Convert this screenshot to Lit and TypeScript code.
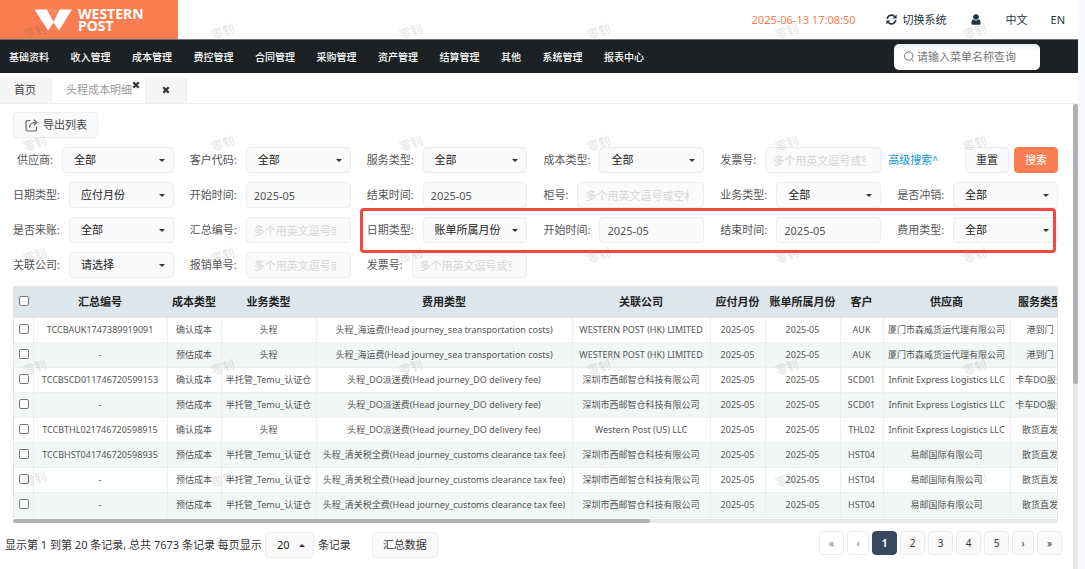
import { LitElement, html, css, nothing } from "lit";
import { customElement, state } from "lit/decorators.js";

type Field = { kind: "select" | "text" | "date"; id: string; label: string; value?: string };

const HINT = "多个用英文逗号或空格分隔";

const FIELDS: Field[][] = [
  [
    { kind: "select", id: "supplier", label: "供应商", value: "全部" },
    { kind: "select", id: "customer", label: "客户代码", value: "全部" },
    { kind: "select", id: "service", label: "服务类型", value: "全部" },
    { kind: "select", id: "cost", label: "成本类型", value: "全部" },
    { kind: "text", id: "invoice", label: "发票号" },
  ],
  [
    { kind: "select", id: "date-type", label: "日期类型", value: "应付月份" },
    { kind: "date", id: "start", label: "开始时间", value: "2025-05" },
    { kind: "date", id: "end", label: "结束时间", value: "2025-05" },
    { kind: "text", id: "container", label: "柜号" },
    { kind: "select", id: "business", label: "业务类型", value: "全部" },
    { kind: "select", id: "offset", label: "是否冲销", value: "全部" },
  ],
  [
    { kind: "select", id: "billed", label: "是否来账", value: "全部" },
    { kind: "text", id: "summary", label: "汇总编号" },
    { kind: "select", id: "date-type-2", label: "日期类型", value: "账单所属月份" },
    { kind: "date", id: "start-2", label: "开始时间", value: "2025-05" },
    { kind: "date", id: "end-2", label: "结束时间", value: "2025-05" },
    { kind: "select", id: "fee", label: "费用类型", value: "全部" },
  ],
  [
    { kind: "select", id: "company", label: "关联公司", value: "请选择" },
    { kind: "text", id: "claim", label: "报销单号" },
    { kind: "text", id: "invoice-2", label: "发票号" },
  ],
];

const MENU = ["基础资料", "收入管理", "成本管理", "费控管理", "合同管理", "采购管理", "资产管理", "结算管理", "其他", "系统管理", "报表中心"];

const COLUMNS = ["汇总编号", "成本类型", "业务类型", "费用类型", "关联公司", "应付月份", "账单所属月份", "客户", "供应商", "服务类型"];

const SEA = "头程_海运费(Head journey_sea transportation costs)";
const DELIVERY = "头程_DO派送费(Head journey_DO delivery fee)";
const CUSTOMS = "头程_清关税全费(Head journey_customs clearance tax fee)";
const HK = "WESTERN POST (HK) LIMITED";
const SZ = "深圳市西邮智仓科技有限公司";
const XM = "厦门市森威货运代理有限公司";
const INF = "Infinit Express Logistics LLC";
const YY = "易邮国际有限公司";
const TEMU = "半托管_Temu_认证仓";
const M = "2025-05";

const ROWS: string[][] = [
  ["TCCBAUK1747389919091", "确认成本", "头程", SEA, HK, M, M, "AUK", XM, "港到门"],
  ["-", "预估成本", "头程", SEA, HK, M, M, "AUK", XM, "港到门"],
  ["TCCBSCD011746720599153", "确认成本", TEMU, DELIVERY, SZ, M, M, "SCD01", INF, "卡车DO服务"],
  ["-", "预估成本", TEMU, DELIVERY, SZ, M, M, "SCD01", INF, "卡车DO服务"],
  ["TCCBTHL021746720598915", "确认成本", "头程", DELIVERY, "Western Post (US) LLC", M, M, "THL02", INF, "散货直发"],
  ["TCCBHST041746720598935", "预估成本", TEMU, CUSTOMS, SZ, M, M, "HST04", YY, "散货直发"],
  ["-", "预估成本", TEMU, CUSTOMS, SZ, M, M, "HST04", YY, "散货直发"],
  ["-", "预估成本", TEMU, CUSTOMS, SZ, M, M, "HST04", YY, "散货直发"],
];

const cross = html`<svg class="cross" viewBox="0 0 8 8" aria-hidden="true">
  <path d="M1.3 1.3 6.7 6.7M6.7 1.3 1.3 6.7" stroke="currentColor" stroke-width="2.3" />
</svg>`;

@customElement("app-root")
export class AppRoot extends LitElement {
  @state() private page = 1;

  static styles = css`
    :host {
      display: block;
      font-family: "Noto Sans", "Noto Sans CJK SC", sans-serif;
      font-size: 11px;
      line-height: 16px;
      color: #555;
      background: #f8f9fe;
    }
    * { box-sizing: border-box; }
    button, input, select { font: inherit; color: inherit; margin: 0; }
    button { cursor: pointer; }
    a { color: inherit; text-decoration: none; }
    ul { list-style: none; margin: 0; padding: 0; }

    .shell {
      position: relative;
      display: flex;
      flex-direction: column;
      min-height: 100vh;
      margin-right: 7px;
      background: #fff;
      overflow: hidden;
    }
    .marks {
      position: absolute;
      inset: 0;
      z-index: 3;
      display: grid;
      grid-template-columns: repeat(6, 188px);
      grid-auto-rows: 112px;
      padding-top: 24px;
      overflow: hidden;
      pointer-events: none;
      color: rgba(70, 60, 60, 0.13);
      font-size: 12px;
      font-weight: 700;
    }
    .mark { margin-left: 23px; }
    .mark span { display: inline-block; transform: rotate(-18deg); }

    .top { display: flex; height: 39px; }
    .brand {
      display: flex;
      align-items: center;
      gap: 6px;
      width: 178px;
      padding-left: 34px;
      background: #f97d50;
      color: #fff;
      font-size: 14px;
      font-weight: 700;
      line-height: 12px;
    }
    .brand svg { width: 38px; height: 22px; }
    .tools {
      display: flex;
      flex: 1;
      align-items: center;
      justify-content: flex-end;
      padding-right: 13px;
      color: #1d3642;
    }
    .clock { color: #f97d50; margin-right: 30px; }
    .switch { display: flex; align-items: center; gap: 6px; padding: 0; border: 0; background: none; margin-right: 24px; }
    .switch svg { width: 11px; height: 11px; }
    .user { display: flex; margin-right: 25px; }
    .user svg { width: 10px; height: 11px; }
    .lang { margin-right: 23px; }

    .nav {
      position: relative;
      z-index: 4;
      display: flex;
      align-items: center;
      justify-content: space-between;
      height: 34px;
      padding: 0 38px 0 9px;
      border-top: 1px solid #6d6f70;
      background: #1d2124;
      color: #fff;
    }
    .menu {
      display: flex;
      flex: 0 1 635px;
      justify-content: space-between;
      font-size: 10px;
      font-weight: 500;
      white-space: nowrap;
    }
    .find {
      display: flex;
      align-items: center;
      gap: 3px;
      width: 146px;
      height: 26px;
      padding: 0 10px;
      border-radius: 5px;
      background: linear-gradient(#eee, #fff 8px);
    }
    .find svg { flex: none; width: 10px; height: 11px; }
    .find input { flex: 1; min-width: 0; padding: 0; border: 0; outline: 0; background: none; color: #555; }
    .find input::placeholder { color: #777; opacity: 1; }

    .tabs { display: flex; height: 31px; padding-top: 4px; border-bottom: 1px solid #eee; }
    .tab { display: flex; align-items: center; background: #f5f5f5; border-right: 1px solid #eceef4; }
    .tab button { display: flex; padding: 0; border: 0; background: none; color: #333; }
    .home { padding: 0 15px 0 14px; color: #444; }
    .active { padding: 0 5px 0 14px; background: #fff; color: #999; }
    .active button { align-self: flex-start; margin-top: 4px; }
    .blank { padding: 0 16px; }
    .cross { width: 8px; height: 8px; }

    .body { display: flex; flex: 1; }
    .main { flex: 1; min-width: 0; padding-top: 8px; border-bottom: 1px solid #eee; }
    .rail { width: 5px; background: #e8e8e8; border-radius: 3px; }
    .thumb { height: 60%; background: #b0b0b0; border-radius: 3px; }
    .inner { padding: 0 15px 0 13px; }

    .box {
      height: 26px;
      border: 1px solid #ebedf3;
      border-radius: 4px;
      background: #fafafa;
    }
    .export { display: flex; align-items: center; gap: 5px; padding: 0 10px 0 11px; color: #444; }
    .export svg { width: 13px; height: 13px; }

    .form {
      display: grid;
      grid-template-columns: repeat(6, minmax(0, 1fr));
      gap: 9px 16px;
      margin-top: 9px;
    }
    .field { display: flex; align-items: center; }
    .field label { flex: none; padding-right: 9px; }
    .first { padding-left: 4px; }
    .pick { position: relative; flex: 1; min-width: 0; }
    .pick::after {
      content: "";
      position: absolute;
      right: 9px;
      top: 12px;
      border: 3px solid transparent;
      border-top-color: #333;
      border-bottom: 0;
      pointer-events: none;
    }
    .up::after { border-bottom: 3px solid #333; border-top: 0; }
    .pick select { display: block; width: 100%; padding: 0 18px 0 11px; appearance: none; color: #222; }
    .entry { flex: 1; min-width: 0; width: 0; padding: 0 14px 0 7px; color: #555; }
    .entry::placeholder { color: #d5d5d5; opacity: 1; }
    .r1c1 { grid-column: 1; }
    .actions { display: flex; align-items: center; justify-content: flex-end; gap: 5px; margin-left: -16px; }
    .more { margin-right: auto; padding-left: 7px; color: #0b97cf; white-space: nowrap; }
    .act { flex: none; width: 44px; padding: 0; color: #333; }
    .go { background: #f97d50; border-color: #f97d50; color: #fff; }
    .ring {
      grid-column: 3 / 7;
      grid-row: 3;
      z-index: 5;
      margin: -9px 2px -10px -7px;
      border: 3px solid #ef4a3e;
      border-radius: 4px;
      pointer-events: none;
    }
    .cell-3-1 { grid-area: 3 / 1; }
    .cell-3-2 { grid-area: 3 / 2; }
    .cell-3-3 { grid-area: 3 / 3; }
    .cell-3-4 { grid-area: 3 / 4; }
    .cell-3-5 { grid-area: 3 / 5; }
    .cell-3-6 { grid-area: 3 / 6; }

    .grid { height: 233px; margin-top: 8px; border: 1px solid #e4e4e4; border-top-width: 2px; border-bottom: 0; overflow: hidden; }
    table { width: 1056px; min-width: 100%; table-layout: fixed; border-collapse: collapse; font-size: 9px; color: #555; }
    th, td { padding: 0; border-right: 1px solid #ebeef0; border-bottom: 1px solid #edf0f0; text-align: center; white-space: nowrap; overflow: hidden; }
    th { height: 29px; background: #dce7ec; border-color: #e2e4e8; font-size: 11px; font-weight: 700; color: #222; }
    td { height: 25px; }
    tbody tr:nth-child(even) { background: #f2f6f5; }
    td input, th input { display: block; width: 10px; height: 10px; margin: 0 0 2px 5px; appearance: none; border: 1px solid #777; border-radius: 2px; background: #fff; }
    .w0 { width: 19px; } .w1 { width: 134px; } .w2 { width: 54px; } .w3 { width: 95px; } .w4 { width: 256px; }
    .w5 { width: 138px; } .w6 { width: 55px; } .w7 { width: 75px; } .w8 { width: 43px; } .w9 { width: 127px; } .w10 { width: 60px; }
    .slide { height: 4px; background: #e8e8e8; border-radius: 2px; overflow: hidden; }
    .slide div { width: 61%; height: 100%; background: #b0b0b0; border-radius: 2px; }

    .foot { display: flex; align-items: center; padding: 8px 11px 11px 5px; color: #333; }
    .size { flex: none; width: 49px; margin: 0 4px 0 3px; }
    .sum { margin-left: 21px; padding: 0 10px; color: #333; }
    .pages { display: flex; gap: 3px; margin: 0 0 3px auto; }
    .pages button { width: 25px; height: 24px; padding: 0; border: 1px solid #e8ebf2; border-radius: 4px; background: #fafafa; font-size: 10px; }
    .pages .plain { background: #fff; color: #777; }
    .pages .slim { width: 22px; }
    .pages .on { background: #36475f; border-color: #36475f; color: #fff; font-weight: 700; }
  `;

  private control(f: Field) {
    if (f.kind === "select") {
      return html`<div class="pick"><select class="box" id=${f.id}><option>${f.value}</option></select></div>`;
    }
    return html`<input class="box entry" type="text" id=${f.id} .value=${f.value ?? ""} placeholder=${f.kind === "text" ? HINT : nothing} />`;
  }

  private field(f: Field, row: number, col: number) {
    const place = row === 2 ? `cell-3-${col + 1}` : row === 0 && col === 0 ? "first" : col === 0 ? "r1c1" : "";
    return html`<div class="field ${place}"><label for=${f.id}>${f.label}:</label>${this.control(f)}</div>`;
  }

  private pager(text: string, cls: string, name: string) {
    return html`<button class=${cls} aria-label=${name}>${text}</button>`;
  }

  render() {
    return html`
      <div class="shell">
        <div class="marks" aria-hidden="true">
          ${Array.from({ length: 30 }, () => html`<div class="mark"><span>零钊</span></div>`)}
        </div>
        <header class="top">
          <div class="brand">
            <svg viewBox="0 0 38 22" aria-hidden="true">
              <path fill="#fff" d="M0.500 0.500H13L19.500 13 25.500 0.500H38L25 21.500 19.500 13.500 14 21.500Z" />
              <path fill="#f98d64" d="M15 0.500H23.500L19.300 8.500Z" />
            </svg>
            <div>WESTERN<br />POST</div>
          </div>
          <div class="tools">
            <span class="clock">2025-06-13 17:08:50</span>
            <button class="switch">
              <svg viewBox="0 0 12 12" fill="none" stroke="currentColor" stroke-width="1.8" aria-hidden="true">
                <path d="M1.300 5.200A4.700 4.700 0 0 1 9.600 3M10.700 6.800A4.700 4.700 0 0 1 2.400 9" />
                <path fill="currentColor" stroke="none" d="M11.600.6V5H7.200ZM.4 11.400V7H4.800Z" />
              </svg>切换系统
            </button>
            <a class="user" href="#" aria-label="用户">
              <svg viewBox="0 0 10 11" fill="currentColor" aria-hidden="true">
                <circle cx="5" cy="3" r="2.800" />
                <path d="M2.300 5.200C.8 5.800.4 7.500.4 9.200.4 10.200 1 10.800 2 10.800H8C9 10.800 9.600 10.200 9.600 9.200 9.600 7.500 9.200 5.800 7.700 5.200 6.200 6.800 3.800 6.800 2.300 5.200Z" />
              </svg>
            </a>
            <a class="lang" href="#">中文</a>
            <a href="#">EN</a>
          </div>
        </header>
        <nav class="nav">
          <ul class="menu">${MENU.map((m) => html`<li><a href="#">${m}</a></li>`)}</ul>
          <label class="find">
            <svg viewBox="0 0 10 11" fill="none" stroke="#777" aria-hidden="true">
              <circle cx="4.700" cy="5" r="4.200" /><path d="M7.500 8.200 9.500 10.500" />
            </svg>
            <input type="text" aria-label="菜单查询" placeholder="请输入菜单名称查询" />
          </label>
        </nav>
        <div class="tabs">
          <a class="tab home" href="#">首页</a>
          <div class="tab active"><span>头程成本明细</span><button aria-label="关闭">${cross}</button></div>
          <div class="tab blank"><button aria-label="关闭">${cross}</button></div>
        </div>
        <div class="body">
          <main class="main">
            <div class="inner">
              <button class="box export">
                <svg viewBox="0 0 13 13" fill="none" stroke="#666" stroke-width="1.200" aria-hidden="true">
                  <path d="M5.500 1.500H2.800A1.800 1.800 0 0 0 1 3.300V10.200A1.800 1.800 0 0 0 2.800 12H9.700A1.800 1.800 0 0 0 11.500 10.200V7.500" />
                  <path d="M4.500 8.500C4.500 5 6.500 3.500 11 3.500M8.800.8 11.800 3.500 8.800 6.200" />
                </svg>导出列表
              </button>
              <form class="form" @submit=${(e: Event) => e.preventDefault()}>
                ${FIELDS[0].map((f, i) => this.field(f, 0, i))}
                <div class="actions">
                  <a class="more" href="#">高级搜索^</a>
                  <button class="box act" type="reset">重置</button>
                  <button class="box act go">搜索</button>
                </div>
                ${FIELDS.slice(1).map((r, y) => r.map((f, i) => this.field(f, y + 1, i)))}
                <div class="ring"></div>
              </form>
              <div class="grid">
                <table>
                  <colgroup>${Array.from({ length: 11 }, (_, i) => html`<col class="w${i}" />`)}</colgroup>
                  <thead>
                    <tr><th><input type="checkbox" aria-label="全选" /></th>${COLUMNS.map((c) => html`<th>${c}</th>`)}</tr>
                  </thead>
                  <tbody>
                    ${ROWS.map((r) => html`<tr><td><input type="checkbox" aria-label="选择" /></td>${r.map((c) => html`<td>${c}</td>`)}</tr>`)}
                  </tbody>
                </table>
              </div>
              <div class="slide"><div></div></div>
            </div>
            <footer class="foot">
              <label for="size">显示第 1 到第 20 条记录, 总共 7673 条记录 每页显示</label>
              <div class="pick up size"><select class="box" id="size"><option>20</option></select></div>
              <span>条记录</span>
              <button class="box sum">汇总数据</button>
              <div class="pages">
                ${this.pager("«", "plain", "首页")}${this.pager("‹", "plain slim", "上一页")}
                ${[1, 2, 3, 4, 5].map((n) => html`<button class=${n === this.page ? "on" : ""} @click=${() => (this.page = n)}>${n}</button>`)}
                ${this.pager("›", "slim", "下一页")}${this.pager("»", "", "末页")}
              </div>
            </footer>
          </main>
          <div class="rail"><div class="thumb"></div></div>
        </div>
      </div>
    `;
  }
}
